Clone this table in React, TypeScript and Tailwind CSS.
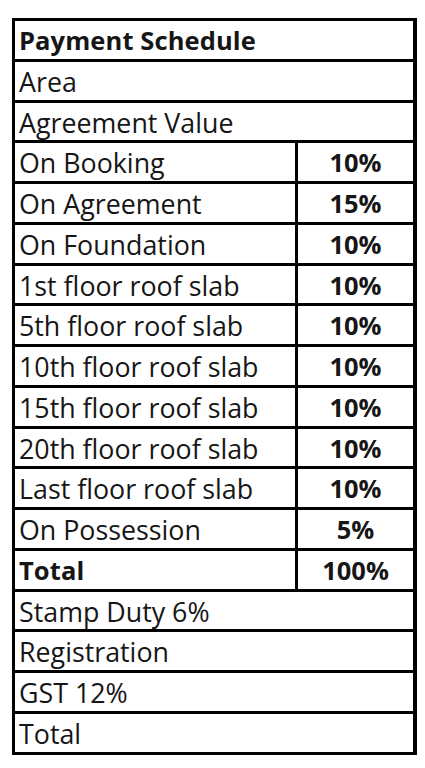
import React from "react";

type Row = { label: string; value?: string; bold?: boolean };

const rows: Row[] = [
  { label: "Payment Schedule", bold: true },
  { label: "Area" },
  { label: "Agreement Value" },
  { label: "On Booking", value: "10%" },
  { label: "On Agreement", value: "15%" },
  { label: "On Foundation", value: "10%" },
  { label: "1st floor roof slab", value: "10%" },
  { label: "5th floor roof slab", value: "10%" },
  { label: "10th floor roof slab", value: "10%" },
  { label: "15th floor roof slab", value: "10%" },
  { label: "20th floor roof slab", value: "10%" },
  { label: "Last floor roof slab", value: "10%" },
  { label: "On Possession", value: "5%" },
  { label: "Total", value: "100%", bold: true },
  { label: "Stamp Duty 6%" },
  { label: "Registration" },
  { label: "GST 12%" },
  { label: "Total" },
];

export default function App() {
  return (
    <div className="w-[425px] h-[768px] bg-white pt-[18px] pl-[12px]" style={{ fontFamily: '"Open Sans", sans-serif' }}>
      <div className="w-[405px] border-t-[3px] border-l-[3px] border-r-[4px] border-black text-[#161616]">
        {rows.map((r, i) => (
          <div key={i} className="flex h-[40.78px] border-b-[3px] border-black">
            <div
              className={`flex-1 pl-[4px] pt-[2px] leading-[35.78px] whitespace-nowrap ${
                r.bold ? "font-bold text-[25.5px] tracking-[0.1px]" : "text-[26.8px]"
              }`}
            >
              {r.label}
            </div>
            {r.value !== undefined && (
              <div className="w-[118px] border-l-[3px] border-black pt-[2px] text-center text-[25.5px] leading-[35.78px] font-bold">
                {r.value}
              </div>
            )}
          </div>
        ))}
      </div>
    </div>
  );
}
